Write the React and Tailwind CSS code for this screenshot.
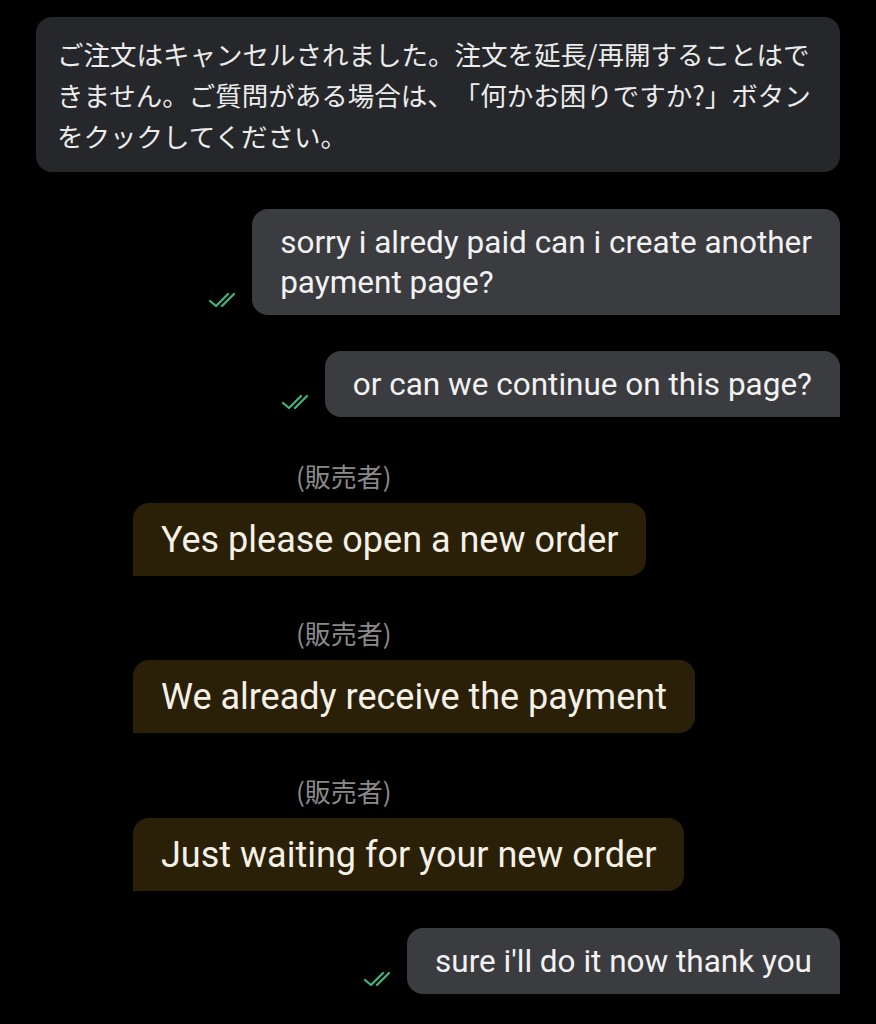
import React from 'react';

const jp = { fontFamily: '"Noto Sans CJK JP", "Noto Sans", sans-serif' };
const en = { fontFamily: 'Roboto, "Noto Sans CJK JP", sans-serif' };

const Check = () => (
  <svg width="30" height="16" viewBox="0 0 30 16" className="shrink-0 mb-[7px]">
    <path d="M2 9 L8 14 L20 2 M14 14 L26 2" fill="none" stroke="#3fb77b" strokeWidth="2.2" strokeLinecap="round" strokeLinejoin="round" />
  </svg>
);

const Mine = ({ lines, className = '' }) => (
  <div className={`flex justify-end items-end gap-[14px] ${className}`}>
    <Check />
    <div
      className="bg-[#3b3c40] text-[#f2f2f2] rounded-t-[16px] rounded-bl-[16px] px-[28px] pt-[14px] pb-[12px] text-[31.5px] leading-[40px]"
      style={en}
    >
      {lines.map((l) => (
        <div key={l} className="whitespace-nowrap">{l}</div>
      ))}
    </div>
  </div>
);

const Seller = ({ text, className = '' }) => (
  <div className={className}>
    <div className="ml-[260px] text-[#8a8a8a] text-[26px] leading-[30px]" style={jp}>
      (販売者)
    </div>
    <div className="flex mt-[12px] ml-[97px]">
      <div
        className="bg-[#2a1f07] text-[#f5f1e6] rounded-tl-[16px] rounded-r-[16px] px-[28px] pt-[16px] pb-[15px] text-[36px] leading-[42px] whitespace-nowrap"
        style={en}
      >
        {text}
      </div>
    </div>
  </div>
);

export default function App() {
  return (
    <div className="w-[876px] h-[1024px] bg-black overflow-hidden px-[36px] pt-[17px]">
      <div
        className="bg-[#25272b] text-[#ececec] rounded-[16px] pl-[21px] pr-[10px] py-[16px] text-[26.5px] leading-[41px] [text-spacing-trim:space-all]"
        style={jp}
      >
        <div className="whitespace-nowrap">ご注文はキャンセルされました。注文を延長/再開することはで</div>
        <div className="whitespace-nowrap">きません。ご質問がある場合は、「何かお困りですか?」ボタン</div>
        <div className="whitespace-nowrap">をクックしてください。</div>
      </div>

      <Mine className="mt-[37px]" lines={['sorry i alredy paid can i create another', 'payment page?']} />
      <Mine className="mt-[36px]" lines={['or can we continue on this page?']} />

      <Seller className="mt-[44px]" text="Yes please open a new order" />
      <Seller className="mt-[42px]" text="We already receive the payment" />
      <Seller className="mt-[43px]" text="Just waiting for your new order" />

      <Mine className="mt-[37px]" lines={["sure i'll do it now thank you"]} />
    </div>
  );
}
